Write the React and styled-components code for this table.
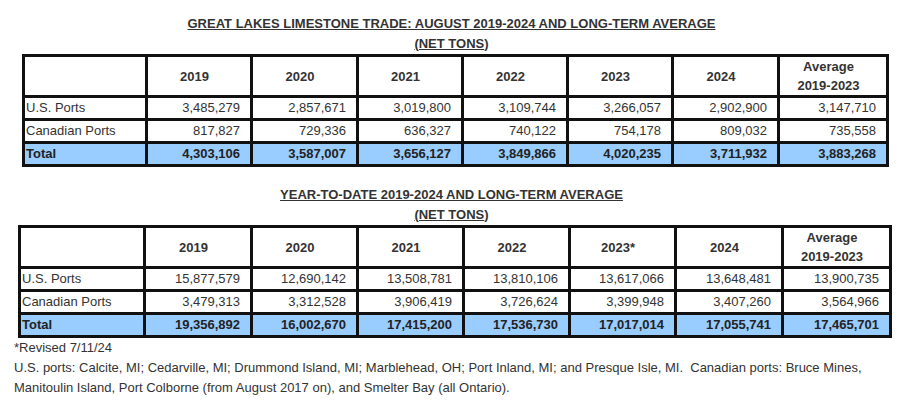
import React from "react";
import styled, { createGlobalStyle } from "styled-components";

const Global = createGlobalStyle`
  html, body { margin: 0; padding: 0; background: #fff; }
  body {
    font-family: "Liberation Sans", Arial, sans-serif;
    font-size: 13px;
    color: #333;
  }
`;

const Page = styled.div`
  width: 903px;
  padding-top: 14px;
`;

const Section = styled.section`
  margin-top: ${(p) => p.$gap || 0}px;
`;

const Title = styled.div`
  text-align: center;
  font-weight: bold;
  line-height: 20px;
  color: #333;
`;

const U = styled.span`
  text-decoration: underline;
`;

const Table = styled.table`
  border-collapse: collapse;
  table-layout: fixed;
  width: ${(p) => p.$width}px;
  margin-left: ${(p) => p.$left}px;
  border: 3px solid #111;
`;

const Th = styled.th`
  border: 3px solid #111;
  padding: 0 10px 0 1px;
  line-height: 19px;
  height: 38px;
  font-weight: bold;
  text-align: center;
  vertical-align: middle;
  color: #333;
`;

const Td = styled.td`
  border: 3px solid #111;
  padding: 0 ${(p) => (p.$label ? 0 : 10)}px 0 1px;
  line-height: 20px;
  height: 20px;
  text-align: ${(p) => (p.$label ? "left" : "right")};
  vertical-align: middle;
  white-space: nowrap;
  font-weight: ${(p) => (p.$total ? "bold" : "normal")};
  background: ${(p) => (p.$total ? "#99ccff" : "#fff")};
  color: ${(p) => (p.$total ? "#222" : "#333")};
`;

const Notes = styled.div`
  padding-left: 14px;
  line-height: 20px;
  color: #333;
`;

function DataTable({ cols, left, years, rows }) {
  const width = cols.reduce((a, b) => a + b, 0) + 3;
  return (
    <Table $width={width} $left={left}>
      <colgroup>
        {cols.map((c, i) => (
          <col key={i} style={{ width: c }} />
        ))}
      </colgroup>
      <thead>
        <tr>
          <Th />
          {years.map((y) => (
            <Th key={y}>{y}</Th>
          ))}
          <Th>
            Average
            <br />
            2019-2023
          </Th>
        </tr>
      </thead>
      <tbody>
        {rows.map((r) => (
          <tr key={r.label}>
            <Td $label $total={r.total}>
              {r.label}
            </Td>
            {r.values.map((v, i) => (
              <Td key={i} $total={r.total}>
                {v}
              </Td>
            ))}
          </tr>
        ))}
      </tbody>
    </Table>
  );
}

const monthRows = [
  {
    label: "U.S. Ports",
    values: ["3,485,279", "2,857,671", "3,019,800", "3,109,744", "3,266,057", "2,902,900", "3,147,710"],
  },
  {
    label: "Canadian Ports",
    values: ["817,827", "729,336", "636,327", "740,122", "754,178", "809,032", "735,558"],
  },
  {
    label: "Total",
    total: true,
    values: ["4,303,106", "3,587,007", "3,656,127", "3,849,866", "4,020,235", "3,711,932", "3,883,268"],
  },
];

const ytdRows = [
  {
    label: "U.S. Ports",
    values: ["15,877,579", "12,690,142", "13,508,781", "13,810,106", "13,617,066", "13,648,481", "13,900,735"],
  },
  {
    label: "Canadian Ports",
    values: ["3,479,313", "3,312,528", "3,906,419", "3,726,624", "3,399,948", "3,407,260", "3,564,966"],
  },
  {
    label: "Total",
    total: true,
    values: ["19,356,892", "16,002,670", "17,415,200", "17,536,730", "17,017,014", "17,055,741", "17,465,701"],
  },
];

export default function App() {
  return (
    <Page>
      <Global />
      <Section>
        <Title>
          <U>GREAT LAKES LIMESTONE TRADE: AUGUST 2019-2024 AND LONG-TERM AVERAGE</U>
        </Title>
        <Title>
          <U>(NET TONS</U>)
        </Title>
        <DataTable
          cols={[123, 105, 106, 105, 105, 105, 106, 109]}
          left={22}
          years={["2019", "2020", "2021", "2022", "2023", "2024"]}
          rows={monthRows}
        />
      </Section>
      <Section $gap={18}>
        <Title>
          <U>YEAR-TO-DATE 2019-2024 AND LONG-TERM AVERAGE</U>
        </Title>
        <Title>
          <U>(NET TONS</U>)
        </Title>
        <DataTable
          cols={[125, 107, 106, 106, 106, 106, 107, 108]}
          left={18}
          years={["2019", "2020", "2021", "2022", "2023*", "2024"]}
          rows={ytdRows}
        />
      </Section>
      <Notes>
        *Revised 7/11/24
        <br />
        U.S. ports: Calcite, MI; Cedarville, MI; Drummond Island, MI; Marblehead, OH; Port Inland, MI; and Presque Isle, MI.&nbsp; Canadian ports: Bruce Mines,
        <br />
        Manitoulin Island, Port Colborne (from August 2017 on), and Smelter Bay (all Ontario).
      </Notes>
    </Page>
  );
}
